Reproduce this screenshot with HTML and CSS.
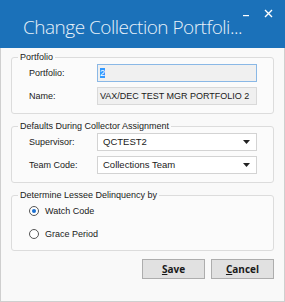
FILE: index.html
```html
<!DOCTYPE html>
<html lang="en">
<head>
    <meta charset="UTF-8">
    <title>Change Collection Portfolio</title>
    <link rel="stylesheet" href="styles.css">
</head>
<body>
    <div class="window">
        <div class="titlebar">
            <span class="title">Change Collection Portfoli...</span>
            <div class="controls">
                <svg class="ctl-min" width="6" height="2" viewBox="0 0 6 2"><rect width="6" height="1.2" fill="#fff"/></svg>
                <svg class="ctl-close" width="9" height="9" viewBox="0 0 9 9"><path d="M1 1L8 8M8 1L1 8" stroke="#fff" stroke-width="1.4"/></svg>
            </div>
        </div>

        <div class="content">
            <fieldset class="group">
                <legend>Portfolio</legend>
                <div class="row">
                    <span class="label">Portfolio:</span>
                    <div class="field focused"><span class="selected">2</span></div>
                </div>
                <div class="row">
                    <span class="label">Name:</span>
                    <div class="field">VAX/DEC TEST MGR PORTFOLIO 2</div>
                </div>
            </fieldset>

            <fieldset class="group">
                <legend>Defaults During Collector Assignment</legend>
                <div class="row">
                    <span class="label">Supervisor:</span>
                    <div class="combo"><span>QCTEST2</span><svg width="7" height="4" viewBox="0 0 7 4"><path d="M0 0H7L3.5 4Z" fill="#222"/></svg></div>
                </div>
                <div class="row">
                    <span class="label">Team Code:</span>
                    <div class="combo"><span>Collections Team</span><svg width="7" height="4" viewBox="0 0 7 4"><path d="M0 0H7L3.5 4Z" fill="#222"/></svg></div>
                </div>
            </fieldset>

            <fieldset class="group group-radio">
                <legend>Determine Lessee Delinquency by</legend>
                <div class="radio-row">
                    <span class="radio checked"></span>
                    <span>Watch Code</span>
                </div>
                <div class="radio-row">
                    <span class="radio"></span>
                    <span>Grace Period</span>
                </div>
            </fieldset>

            <div class="buttons">
                <button class="btn"><u>S</u>ave</button>
                <button class="btn"><u>C</u>ancel</button>
            </div>
        </div>
    </div>
</body>
</html>
```

FILE: styles.css
```css
body {
    margin: 0;
    font-family: "Liberation Sans", Arial, sans-serif;
    font-size: 9px;
    color: #1a1a1a;
}
.window {
    width: 285px;
    height: 302px;
    box-sizing: border-box;
    border: 1px solid #cfcfcf;
    border-top: none;
    background: #f9f9f9;
}
.titlebar {
    position: relative;
    height: 48px;
    margin: 0 -1px;
    background: #1b71b9;
    box-sizing: border-box;
    padding: 14px 0 0 23px;
}
.title {
    font-family: "Open Sans", sans-serif;
    font-weight: 300;
    font-size: 19px;
    letter-spacing: -0.5px;
    color: #e8f1f9;
    white-space: nowrap;
}
.controls {
    position: absolute;
    top: 9px;
    right: 12px;
    display: flex;
    align-items: flex-start;
    gap: 15px;
}
.ctl-min {
    margin-top: 6px;
}
.content {
    padding: 3px 10px 0 10px;
}
.group {
    min-width: 0;
    margin: 0 0 6px 0;
    padding: 0 16px 8px 17px;
    border: 1px solid #dcdcdc;
    border-radius: 3px;
    background: #fbfbfb;
}
.group legend {
    padding: 0 2px;
    margin-left: -11px;
    line-height: 12px;
}
.row {
    display: flex;
    align-items: center;
    margin-top: 5px;
}
.row:first-of-type {
    margin-top: 1px;
}
.label {
    width: 68px;
    flex: none;
}
.field, .combo {
    flex: 1;
    min-width: 0;
    height: 18px;
    box-sizing: border-box;
    border: 1px solid #d9d9d9;
    background: #f0f0f0;
    padding: 0 2px;
    line-height: 16px;
    white-space: nowrap;
    overflow: hidden;
}
.field.focused {
    border-color: #8ab8e6;
}
.selected {
    background: #3399ff;
    color: #fff;
}
.combo {
    display: flex;
    align-items: center;
    justify-content: space-between;
    background: #fff;
    border-color: #d3d3d3;
    padding: 0 6px 0 5px;
    font-size: 9.5px;
}
.group-radio {
    padding-bottom: 11px;
}
.radio-row {
    display: flex;
    align-items: center;
    gap: 6px;
    margin-top: 13px;
}
.radio-row:first-of-type {
    margin-top: 5px;
}
.radio {
    width: 10px;
    height: 10px;
    box-sizing: border-box;
    border: 1px solid #555;
    border-radius: 50%;
    background: #fff;
    display: flex;
    align-items: center;
    justify-content: center;
}
.radio.checked::after {
    content: "";
    width: 4px;
    height: 4px;
    border-radius: 50%;
    background: #1a6fd0;
}
.buttons {
    display: flex;
    justify-content: flex-end;
    gap: 6px;
    margin-top: 8px;
}
.btn {
    width: 63px;
    height: 20px;
    border: 1px solid #adadad;
    background: #e1e1e1;
    font-family: "Open Sans", sans-serif;
    font-weight: 700;
    font-size: 10px;
    color: #1a1a1a;
    padding: 0;
}
```
